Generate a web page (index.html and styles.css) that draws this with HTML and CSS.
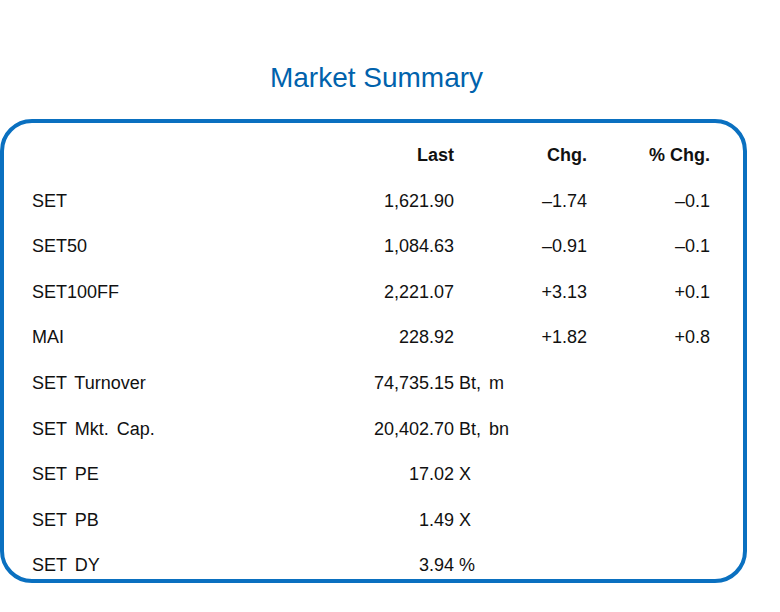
FILE: index.html
```html
<!DOCTYPE html>
<html>
<head>
<meta charset="utf-8">
<link rel="stylesheet" href="styles.css">
</head>
<body>
<h1 class="title">Market Summary</h1>
<div class="box">
  <div class="row head">
    <div></div>
    <div class="num">Last</div>
    <div class="num">Chg.</div>
    <div class="num">% Chg.</div>
  </div>
  <div class="row"><div>SET</div><div class="num">1,621.90</div><div class="num">–1.74</div><div class="num">–0.1</div></div>
  <div class="row"><div>SET50</div><div class="num">1,084.63</div><div class="num">–0.91</div><div class="num">–0.1</div></div>
  <div class="row"><div>SET100FF</div><div class="num">2,221.07</div><div class="num">+3.13</div><div class="num">+0.1</div></div>
  <div class="row"><div>MAI</div><div class="num">228.92</div><div class="num">+1.82</div><div class="num">+0.8</div></div>
  <div class="row stat"><div>SET Turnover</div><div class="num">74,735.15</div><div class="unit">Bt, m</div></div>
  <div class="row stat"><div>SET Mkt. Cap.</div><div class="num">20,402.70</div><div class="unit">Bt, bn</div></div>
  <div class="row stat"><div>SET PE</div><div class="num">17.02</div><div class="unit">X</div></div>
  <div class="row stat"><div>SET PB</div><div class="num">1.49</div><div class="unit">X</div></div>
  <div class="row stat"><div>SET DY</div><div class="num">3.94</div><div class="unit">%</div></div>
</div>
</body>
</html>
```
FILE: styles.css
```css
html, body {
  margin: 0;
  padding: 0;
  background: #ffffff;
}
body {
  font-family: "Liberation Sans", Arial, sans-serif;
  color: #111111;
}
.title {
  margin: 0;
  padding-top: 60px;
  height: 119px;
  box-sizing: border-box;
  width: 753px;
  text-align: center;
  font-size: 28px;
  line-height: 36px;
  font-weight: normal;
  color: #0062ac;
}
.box {
  margin-top: 0;
  width: 747px;
  height: 464px;
  box-sizing: border-box;
  border: 4px solid #0a70c0;
  border-radius: 32px;
}
.row {
  display: grid;
  grid-template-columns: 250px 172px 133px 123px;
  padding-left: 28px;
  height: 45.6px;
  box-sizing: border-box;
  padding-top: 22px;
  font-size: 18px;
  line-height: 20px;
  white-space: nowrap;
}
.head {
  font-weight: bold;
}
.num {
  text-align: right;
}
.stat {
  word-spacing: 3px;
}
.unit {
  grid-column: 3 / 5;
  padding-left: 5px;
}
```
